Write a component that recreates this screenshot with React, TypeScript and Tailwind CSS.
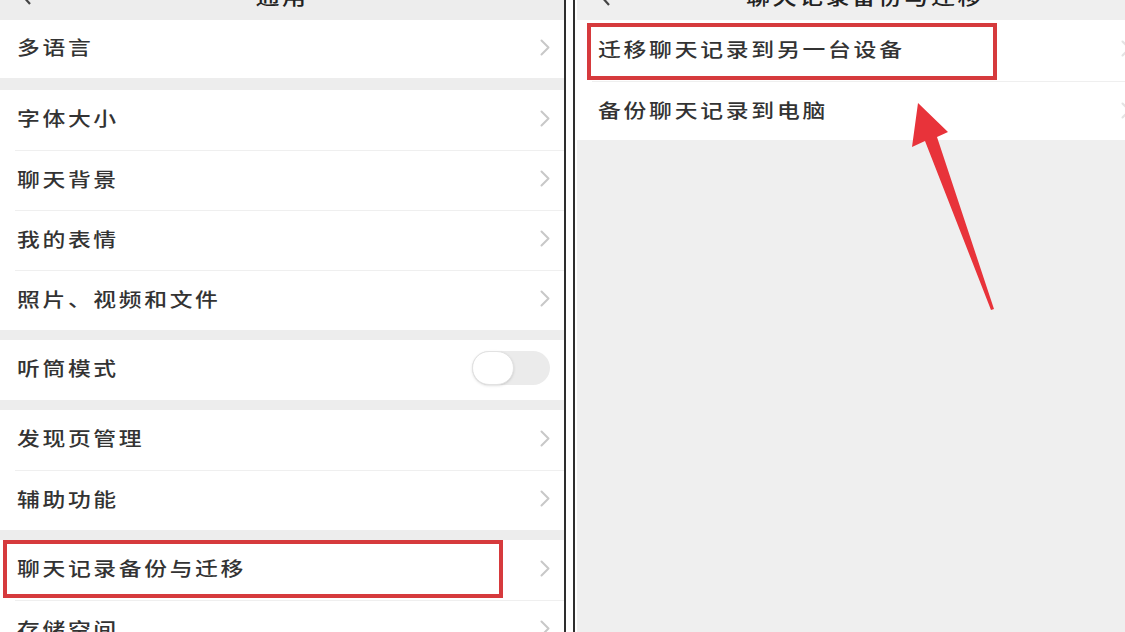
import React from "react";

const font = "font-['Noto_Sans_CJK_SC','Noto_Sans',sans-serif]";

function Chevron({ className = "" }: { className?: string }) {
  return (
    <svg width="10" height="17" viewBox="0 0 10 17" className={className}>
      <path d="M1.5 1.5 L8.5 8.5 L1.5 15.5" fill="none" stroke="#c8c8c8" strokeWidth="2" strokeLinecap="round" strokeLinejoin="round" />
    </svg>
  );
}

function Label({ text, spacing = "tracking-[2.2px]" }: { text: string; spacing?: string }) {
  return (
    <span className={`inline-block origin-left scale-x-[1.2] text-[19px] leading-6 font-medium text-[#333] ${spacing} whitespace-nowrap`}>
      {text}
    </span>
  );
}

function Toggle() {
  return (
    <div className="relative w-[78px] h-[34px] rounded-full bg-[#ebebeb]">
      <div className="absolute left-0 top-0 w-[42px] h-[34px] rounded-full bg-white border border-[#e2e2e2] shadow-sm" />
    </div>
  );
}

function Row({
  label,
  height = "h-[60px]",
  divider = false,
  toggle = false,
  boxed = false,
}: {
  label: string;
  height?: string;
  divider?: boolean;
  toggle?: boolean;
  boxed?: boolean;
}) {
  return (
    <div className={`relative shrink-0 bg-white flex flex-col ${height}`}>
      {divider && <div className="h-px bg-[#efefef] ml-[15px]" />}
      <div className="flex-1 flex items-center justify-between pl-[17px] pr-[14px] pb-[4px]">
        <Label text={label} />
        {toggle ? <Toggle /> : <Chevron />}
      </div>
      {boxed && (
        <div className="absolute left-[3px] top-0 w-[500px] h-[58px] border-4 border-[#d63a3d]" />
      )}
    </div>
  );
}

function Header({ title }: { title: string }) {
  return (
    <div className="relative shrink-0 h-[20px] overflow-hidden flex justify-center">
      <svg width="12" height="24" viewBox="0 0 12 24" className="absolute left-[20px] -top-[17px]">
        <path d="M10 3 L2 12 L10 21" fill="none" stroke="#444" strokeWidth="2.2" />
      </svg>
      <span className="-mt-[15px] inline-block scale-x-[1.2] text-[20px] leading-6 font-medium tracking-[2px] text-[#222] whitespace-nowrap">
        {title}
      </span>
    </div>
  );
}

export default function App() {
  return (
    <div className={`relative w-[1125px] h-[632px] overflow-hidden flex bg-white ${font}`}>
      {/* left phone */}
      <div className="w-[564px] shrink-0 bg-[#ededed] flex flex-col">
        <Header title="通用" />
        <Row label="多语言" height="h-[58px]" />
        <div className="h-[12px] shrink-0" />
        <Row label="字体大小" />
        <Row label="聊天背景" divider />
        <Row label="我的表情" divider />
        <Row label="照片、视频和文件" divider />
        <div className="h-[10px] shrink-0" />
        <Row label="听筒模式" toggle />
        <div className="h-[10px] shrink-0" />
        <Row label="发现页管理" />
        <Row label="辅助功能" divider />
        <div className="h-[10px] shrink-0" />
        <Row label="聊天记录备份与迁移" boxed />
        <Row label="存储空间" divider />
      </div>

      {/* divider between screenshots */}
      <div className="w-[2px] shrink-0 bg-[#2e2e2e]" />
      <div className="w-[7px] shrink-0 bg-white" />
      <div className="w-[2px] shrink-0 bg-[#2e2e2e]" />
      <div className="w-[2px] shrink-0 bg-white" />

      {/* right phone */}
      <div className="flex-1 bg-[#efefef] flex flex-col">
        <div className="relative shrink-0 h-[20px] overflow-hidden flex justify-center pl-[28px]">
          <svg width="12" height="24" viewBox="0 0 12 24" className="absolute left-[22px] -top-[16px]">
            <path d="M10 3 L2 12 L10 21" fill="none" stroke="#444" strokeWidth="2.2" />
          </svg>
          <span className="-mt-[15px] inline-block scale-x-[1.2] text-[20px] leading-6 font-medium tracking-[2px] text-[#222] whitespace-nowrap">
            聊天记录备份与迁移
          </span>
        </div>
        <div className="relative shrink-0 h-[61px] bg-white flex items-center justify-between pl-[21px] pb-[4px]">
          <Label text="迁移聊天记录到另一台设备" spacing="tracking-[2.3px]" />
          <Chevron className="-mr-[6px] opacity-50" />
          <div className="absolute left-[10px] top-[3px] w-[410px] h-[57px] border-4 border-[#d63a3d]" />
        </div>
        <div className="shrink-0 h-[59px] bg-white flex flex-col">
          <div className="h-px bg-[#efefef] ml-[15px]" />
          <div className="flex-1 flex items-center justify-between pl-[21px] pb-[2px]">
            <Label text="备份聊天记录到电脑" spacing="tracking-[2.3px]" />
            <Chevron className="-mr-[6px] opacity-50" />
          </div>
        </div>
      </div>

      {/* annotation arrow */}
      <svg
        className="absolute inset-0 pointer-events-none"
        width="1125"
        height="632"
        viewBox="0 0 1125 632"
      >
        <polygon
          points="918,103 948,132 937,137 994,309 991,310 925,141 912,147"
          fill="#e8333a"
        />
      </svg>
    </div>
  );
}
